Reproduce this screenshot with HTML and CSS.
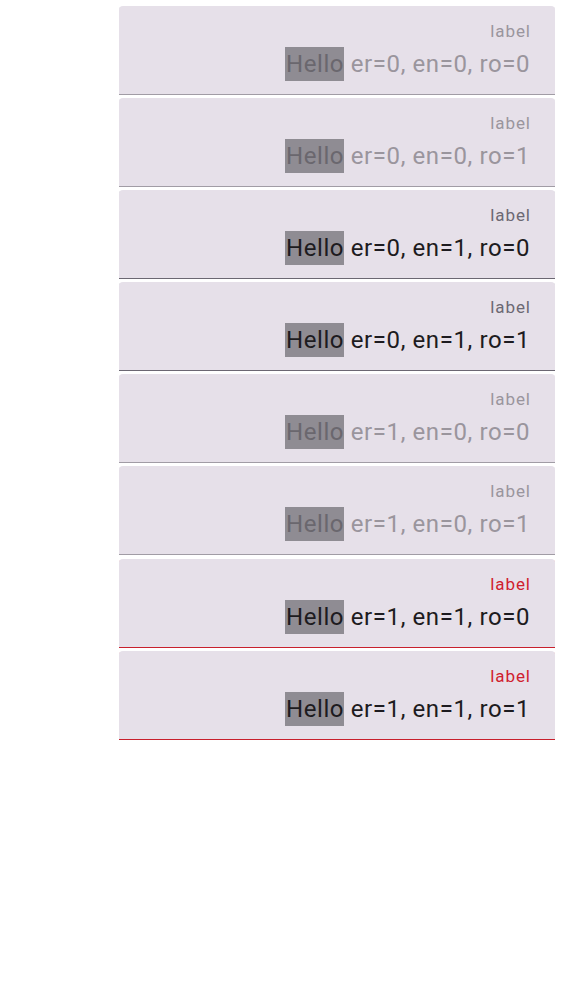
FILE: index.html
```html
<!DOCTYPE html>
<html>
<head>
<meta charset="utf-8">
<link rel="stylesheet" href="styles.css">
</head>
<body>
<div class="list">
  <div class="field disabled"><div class="label">label</div><div class="value"><span class="sel">Hello</span> er=0, en=0, ro=0</div></div>
  <div class="field disabled"><div class="label">label</div><div class="value"><span class="sel">Hello</span> er=0, en=0, ro=1</div></div>
  <div class="field enabled"><div class="label">label</div><div class="value"><span class="sel">Hello</span> er=0, en=1, ro=0</div></div>
  <div class="field enabled"><div class="label">label</div><div class="value"><span class="sel">Hello</span> er=0, en=1, ro=1</div></div>
  <div class="field disabled"><div class="label">label</div><div class="value"><span class="sel">Hello</span> er=1, en=0, ro=0</div></div>
  <div class="field disabled"><div class="label">label</div><div class="value"><span class="sel">Hello</span> er=1, en=0, ro=1</div></div>
  <div class="field error shift"><div class="label">label</div><div class="value"><span class="sel">Hello</span> er=1, en=1, ro=0</div></div>
  <div class="field error"><div class="label">label</div><div class="value"><span class="sel">Hello</span> er=1, en=1, ro=1</div></div>
</div>
</body>
</html>
```
FILE: styles.css
```css
html, body {
  margin: 0;
  padding: 0;
  background: #ffffff;
}
body {
  font-family: Roboto, "Liberation Sans", sans-serif;
}
.list {
  display: flex;
  flex-direction: column;
  gap: 3px;
  padding: 6px 7px 0 119px;
}
.field {
  --line: #a19ca5;
  box-sizing: border-box;
  height: 89px;
  background: #e6e0e9;
  border-radius: 4px 4px 0 0;
  box-shadow: inset 0 -1px 0 var(--line);
  padding: 15px 25px 0 16px;
  text-align: right;
  display: flex;
  flex-direction: column;
  gap: 6px;
}
.shift {
  margin-top: 1px;
}
.label {
  font-size: 17px;
  line-height: 20px;
  letter-spacing: 0.9px;
  margin-right: -0.9px;
  color: #9a959d;
}
.value {
  font-size: 24px;
  line-height: 34px;
  letter-spacing: 0.6px;
  margin-right: -0.6px;
  padding-right: 0.5px;
  color: #9a959d;
  white-space: nowrap;
}
.sel {
  display: inline-block;
  background: #8f8c93;
  color: #6a676e;
  padding-left: 1px;
}
.enabled {
  --line: #6b6772;
}
.enabled .label {
  color: #6c6873;
}
.enabled .value,
.error .value {
  color: #1d1b20;
}
.enabled .sel,
.error .sel {
  color: #1d1b20;
}
.error {
  --line: #c8202d;
}
.error .label {
  color: #d0202e;
}
```
